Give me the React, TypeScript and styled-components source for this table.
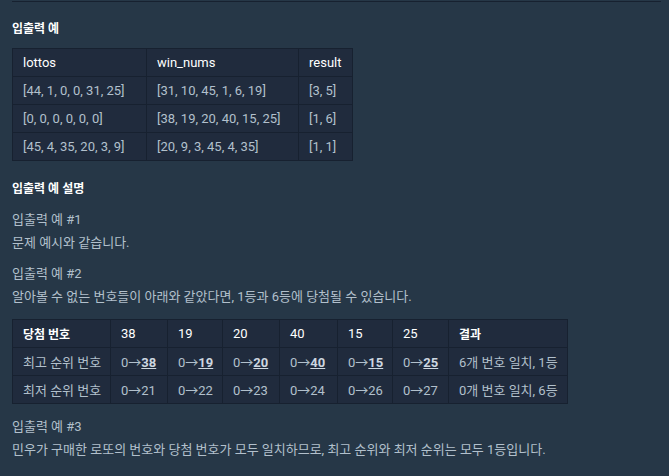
import React from 'react';
import styled, { createGlobalStyle } from 'styled-components';

const GlobalStyle = createGlobalStyle`
  html, body {
    margin: 0;
    padding: 0;
    background-color: #263747;
  }

  body {
    font-family: Roboto, "Noto Sans CJK KR", sans-serif;
    font-size: 13px;
    color: #b2c0cc;
  }
`;

const Page = styled.div`
  min-height: 476px;
  padding: 1px 8px 0 12px;
  box-sizing: border-box;
`;

const Rule = styled.div`
  height: 1px;
  width: 649px;
  background-color: #172130;
`;

const Heading = styled.h5<{ $top: number }>`
  margin: ${props => props.$top}px 0 7px;
  font-size: 12px;
  line-height: 23px;
  font-weight: 700;
  color: #ffffff;
`;

const Paragraph = styled.p<{ $gap: number }>`
  margin: 0 0 ${props => props.$gap}px;
  line-height: 23px;
`;

const Table = styled.table<{ $width: number }>`
  width: ${props => props.$width}px;
  table-layout: fixed;
  border-collapse: collapse;
  background-color: #202b3d;
  border: 1px solid #172130;
  margin-bottom: 11px;
`;

const HeadCell = styled.th<{ $bold?: boolean }>`
  height: 27px;
  padding: 0 10px;
  text-align: left;
  font-size: ${props => (props.$bold ? 12 : 13)}px;
  font-weight: ${props => (props.$bold ? 700 : 400)};
  color: #ffffff;
  border: 1px solid #172130;
  white-space: nowrap;
`;

const Cell = styled.td`
  height: 27px;
  padding: 0 10px;
  border: 1px solid #172130;
  white-space: nowrap;
`;

const Hit = styled.strong`
  text-decoration: underline;
  color: #cdd7e0;
`;

const examples = [
  ['[44, 1, 0, 0, 31, 25]', '[31, 10, 45, 1, 6, 19]', '[3, 5]'],
  ['[0, 0, 0, 0, 0, 0]', '[38, 19, 20, 40, 15, 25]', '[1, 6]'],
  ['[45, 4, 35, 20, 3, 9]', '[20, 9, 3, 45, 4, 35]', '[1, 1]'],
];

const winNums = ['38', '19', '20', '40', '15', '25'];
const worst = ['21', '22', '23', '24', '26', '27'];

const App: React.FC = () => {
  return (
    <Page>
      <GlobalStyle />
      <Rule />

      <Heading $top={16}>입출력 예</Heading>
      <Table $width={340}>
        <colgroup>
          <col style={{ width: 134 }} />
          <col style={{ width: 152 }} />
          <col style={{ width: 54 }} />
        </colgroup>
        <thead>
          <tr>
            <HeadCell>lottos</HeadCell>
            <HeadCell>win_nums</HeadCell>
            <HeadCell>result</HeadCell>
          </tr>
        </thead>
        <tbody>
          {examples.map(row => (
            <tr key={row[0]}>
              {row.map(v => (
                <Cell key={v}>{v}</Cell>
              ))}
            </tr>
          ))}
        </tbody>
      </Table>

      <Heading $top={17}>입출력 예 설명</Heading>
      <Paragraph $gap={8}>
        입출력 예 #1
        <br />
        문제 예시와 같습니다.
      </Paragraph>
      <Paragraph $gap={11}>
        입출력 예 #2
        <br />
        알아볼 수 없는 번호들이 아래와 같았다면, 1등과 6등에 당첨될 수 있습니다.
      </Paragraph>

      <Table $width={555}>
        <colgroup>
          {[98, 57, 55, 57, 58, 55, 56, 119].map((w, i) => (
            <col key={i} style={{ width: w }} />
          ))}
        </colgroup>
        <thead>
          <tr>
            <HeadCell $bold>당첨 번호</HeadCell>
            {winNums.map(n => (
              <HeadCell key={n}>{n}</HeadCell>
            ))}
            <HeadCell $bold>결과</HeadCell>
          </tr>
        </thead>
        <tbody>
          <tr>
            <Cell>최고 순위 번호</Cell>
            {winNums.map(n => (
              <Cell key={n}>
                0→<Hit>{n}</Hit>
              </Cell>
            ))}
            <Cell>6개 번호 일치, 1등</Cell>
          </tr>
          <tr>
            <Cell>최저 순위 번호</Cell>
            {worst.map(n => (
              <Cell key={n}>0→{n}</Cell>
            ))}
            <Cell>0개 번호 일치, 6등</Cell>
          </tr>
        </tbody>
      </Table>

      <Paragraph $gap={0}>
        입출력 예 #3
        <br />
        민우가 구매한 로또의 번호와 당첨 번호가 모두 일치하므로, 최고 순위와 최저 순위는 모두 1등입니다.
      </Paragraph>
    </Page>
  );
};

export default App;
